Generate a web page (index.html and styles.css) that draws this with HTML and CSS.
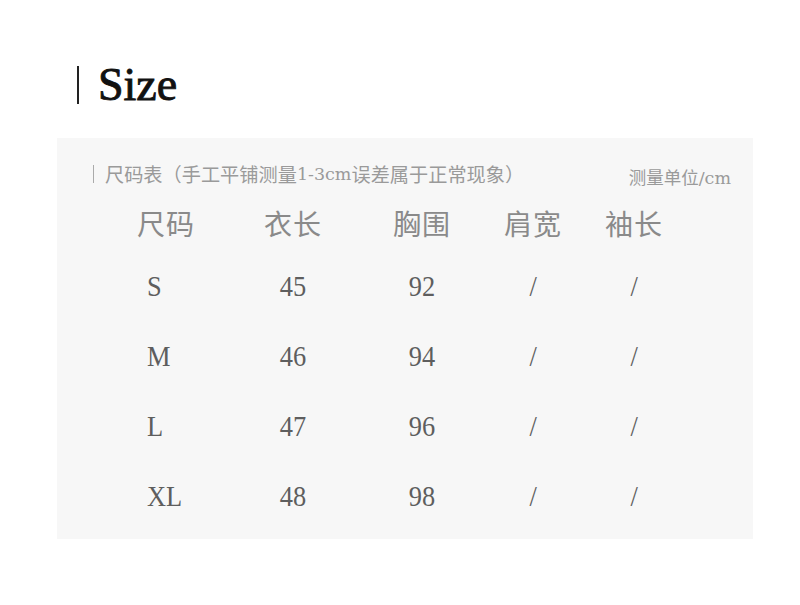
FILE: index.html
```html
<!DOCTYPE html>
<html lang="zh-CN">
<head>
<meta charset="utf-8">
<title>Size</title>
<link rel="stylesheet" href="styles.css">
</head>
<body>
<div class="page">
  <div class="heading">
    <span class="heading-bar"></span>
    <h1 class="heading-text">Size</h1>
  </div>
  <section class="panel">
    <div class="panel-top">
      <div class="note"><span class="note-bar"></span>尺码表（手工平铺测量<span class="latin">1-3cm</span>误差属于正常现象）</div>
      <div class="unit">测量单位<span class="latin">/cm</span></div>
    </div>
    <div class="table">
      <div class="th">尺码</div><div class="th">衣长</div><div class="th">胸围</div><div class="th">肩宽</div><div class="th">袖长</div>
      <div class="td first"><span class="num">S</span></div><div class="td"><span class="num">45</span></div><div class="td"><span class="num">92</span></div><div class="td"><span class="num">/</span></div><div class="td"><span class="num">/</span></div>
      <div class="td first"><span class="num">M</span></div><div class="td"><span class="num">46</span></div><div class="td"><span class="num">94</span></div><div class="td"><span class="num">/</span></div><div class="td"><span class="num">/</span></div>
      <div class="td first"><span class="num">L</span></div><div class="td"><span class="num">47</span></div><div class="td"><span class="num">96</span></div><div class="td"><span class="num">/</span></div><div class="td"><span class="num">/</span></div>
      <div class="td first"><span class="num">XL</span></div><div class="td"><span class="num">48</span></div><div class="td"><span class="num">98</span></div><div class="td"><span class="num">/</span></div><div class="td"><span class="num">/</span></div>
    </div>
  </section>
</div>
</body>
</html>
```
FILE: styles.css
```css
* { box-sizing: border-box; }
html, body { margin: 0; padding: 0; background: #fff; }
body { font-family: "Noto Sans CJK SC", "Noto Sans", sans-serif; }
.page { width: 800px; height: 605px; padding-top: 64px; }
.heading { display: flex; align-items: center; margin-left: 77px; height: 42px; }
.heading-bar { width: 2px; height: 38px; background: #222; }
.heading-text {
  margin: 0 0 0 19px;
  font-family: "Liberation Serif", serif;
  font-weight: normal;
  font-size: 46px;
  line-height: 42px;
  color: #111;
  -webkit-text-stroke: 0.9px #111;
}
.panel {
  margin: 32px 0 0 57px;
  width: 696px;
  height: 401px;
  background: #f7f7f7;
  padding-top: 24px;
}
.panel-top {
  display: flex;
  justify-content: space-between;
  align-items: flex-end;
  padding: 0 22px 0 36px;
  height: 24px;
}
.note {
  display: flex;
  align-items: center;
  font-size: 19.2px;
  line-height: 24px;
  color: #9a9a9a;
  white-space: nowrap;
}
.note-bar { width: 1px; height: 18px; background: #aaa; margin-right: 11px; }
.latin { font-family: "DejaVu Serif", serif; font-size: 17.5px; }
.unit { font-size: 17.5px; line-height: 22px; color: #9a9a9a; white-space: nowrap; margin-bottom: -3px; }
.unit .latin { font-size: 17.5px; }
.table {
  margin: 12px 0 0 49px;
  display: grid;
  grid-template-columns: 120px 134px 124px 98px 104px;
  grid-template-rows: 53px repeat(4, 70px);
}
.th {
  display: flex;
  align-items: center;
  justify-content: center;
  font-size: 28px;
  color: #8a8a8a;
  letter-spacing: 1px;
  padding-bottom: 3px;
}
.td {
  display: flex;
  align-items: center;
  justify-content: center;
  color: #5e5e5e;
}
.td.first { justify-content: flex-start; padding-left: 41px; }
.num {
  display: inline-block;
  font-family: "Liberation Serif", serif;
  font-size: 30px;
  line-height: 30px;
  transform: scaleX(0.88);
  transform-origin: center;
}
.td.first .num { transform-origin: left center; }
```
